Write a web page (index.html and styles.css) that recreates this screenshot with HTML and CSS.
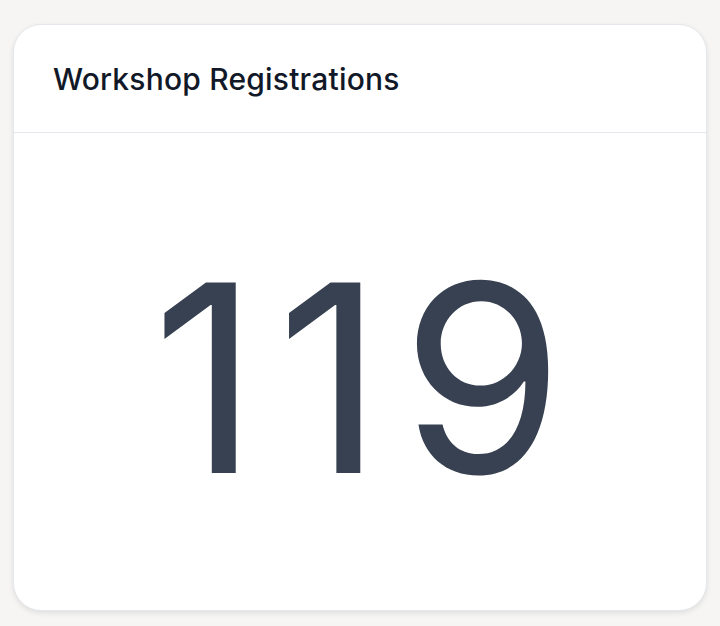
FILE: index.html
```html
<!DOCTYPE html>
<html>
<head>
<meta charset="utf-8">
<link rel="stylesheet" href="styles.css">
</head>
<body>
<div class="page">
  <div class="card">
    <div class="card-header">
      <h2 class="title">Workshop Registrations</h2>
    </div>
    <div class="card-body">
      <span class="value">119</span>
    </div>
  </div>
</div>
</body>
</html>
```
FILE: styles.css
```css
html, body {
  margin: 0;
  padding: 0;
  background: #f6f5f3;
  font-family: Inter, "Noto Sans", sans-serif;
}
.page {
  width: 720px;
  height: 626px;
  box-sizing: border-box;
  padding: 24px 13px 15px 13px;
}
.card {
  height: 100%;
  box-sizing: border-box;
  background: #ffffff;
  border: 1px solid #e6e7ec;
  border-radius: 28px;
  box-shadow: 0 2px 5px rgba(60, 64, 90, 0.12);
  display: flex;
  flex-direction: column;
  overflow: hidden;
}
.card-header {
  height: 108px;
  box-sizing: border-box;
  border-bottom: 1px solid #e6e7ec;
  display: flex;
  align-items: center;
  padding: 0 39px;
}
.title {
  margin: 0;
  font-size: 30px;
  font-weight: 500;
  color: #111827;
  letter-spacing: 0.2px;
}
.card-body {
  flex: 1;
  display: flex;
  align-items: center;
  justify-content: center;
}
.value {
  font-size: 262px;
  line-height: 1;
  font-weight: 400;
  color: #374151;
  margin-top: 12px;
  letter-spacing: 18px;
  margin-right: -14px;
}
```
